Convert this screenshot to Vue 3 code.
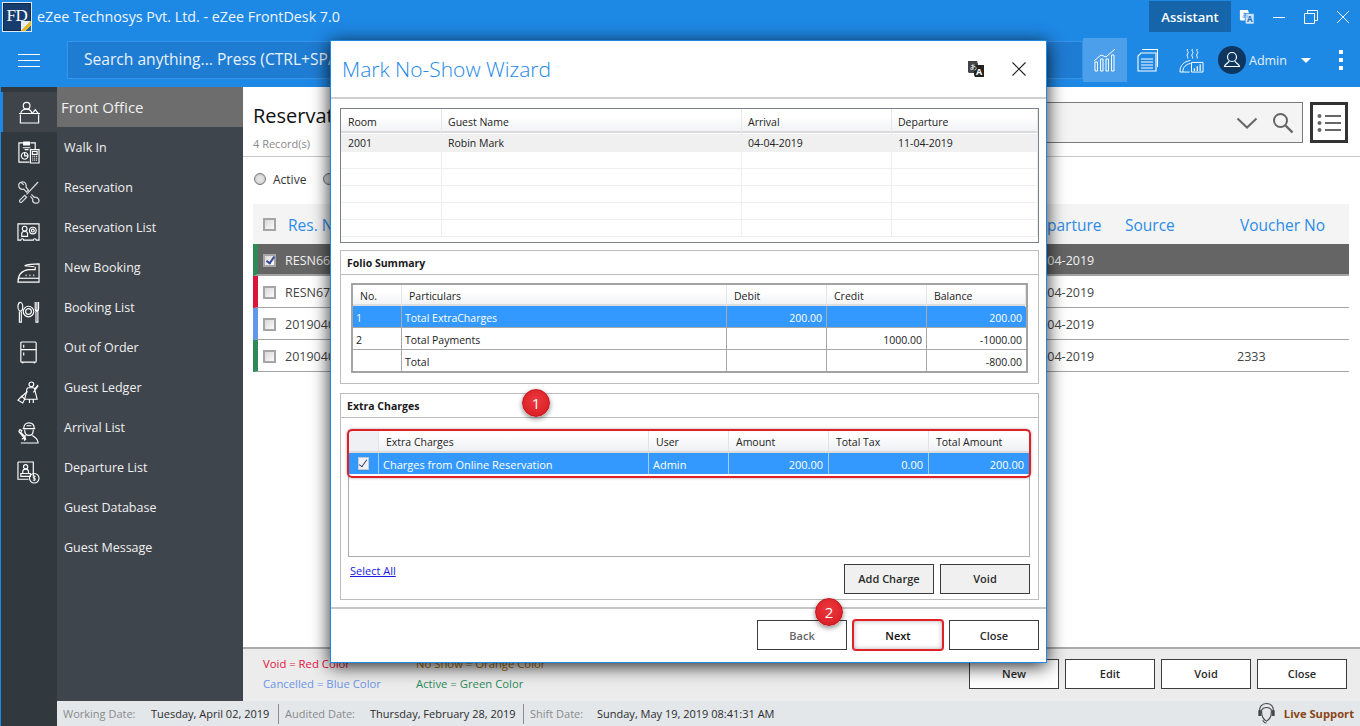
<script setup>
const nav = ['Walk In','Reservation','Reservation List','New Booking','Booking List','Out of Order','Guest Ledger','Arrival List','Departure List','Guest Database','Guest Message']
const rows = [
  { no:'RESN6601', dep:'11-04-2019', v:'', mark:'green', sel:true },
  { no:'RESN6702', dep:'11-04-2019', v:'', mark:'red' },
  { no:'20190401', dep:'11-04-2019', v:'', mark:'blue' },
  { no:'20190402', dep:'11-04-2019', v:'2333', mark:'green' },
]
const emptyRows = [1,2,3,4,5]
</script>

<template>
  <div class="app">
    <header class="topbar">
      <div class="titlerow">
        <div class="logo"><span>FD</span><i class="fold"></i></div>
        <div class="apptitle">eZee Technosys Pvt. Ltd. - eZee FrontDesk 7.0</div>
        <div class="assistant">Assistant</div>
        <svg class="translate" viewBox="0 0 18 18" width="16" height="16"><path d="M1 1h9l1 3v9H2L1 12z" fill="#fff"/><path d="M7 5h10v12H8l-1-2z" fill="#cfe4f8" stroke="#1e88e5" stroke-width=".8"/><text x="9" y="15" font-size="9" font-weight="700" fill="#1e6fbe" font-family="Open Sans">A</text><text x="3" y="9" font-size="7" fill="#1e88e5" font-family="Open Sans">あ</text></svg>
        <svg class="winbtn" viewBox="0 0 14 14" width="14" height="14"><path d="M1 7.500h12" stroke="#fff" stroke-width="1"/></svg>
        <svg class="winbtn" viewBox="0 0 14 14" width="14" height="14"><path d="M3.500 3V.5h10v10H11M.5 3.500h10v10H.5z" fill="none" stroke="#fff"/></svg>
        <svg class="winbtn" viewBox="0 0 14 14" width="14" height="14"><path d="M1 1l12 12M13 1L1 13" stroke="#fff" stroke-width="1"/></svg>
      </div>
      <div class="toolrow">
        <div class="burger"><i></i><i></i><i></i></div>
        <div class="searchall">Search anything... Press (CTRL+SPACE)</div>
        <div class="tool active">
          <svg viewBox="0 0 24 24" width="24" height="24" fill="none" stroke="#fff" stroke-width="1"><path d="M1 13l7-6 5 2 9-8"/><path d="M2 14h2.500v9H2zM7.500 11H10v12H7.500zM13 11h2.500v12H13zM18.500 7H21v16h-2.500z"/></svg>
        </div>
        <div class="tool doc">
          <svg viewBox="0 0 24 24" width="24" height="24" fill="none" stroke="#fff" stroke-width="1.100"><path d="M6 1.500h15.500V19"/><path d="M5 5h15v18H2V8z"/><path d="M5 11h12M5 14h12M5 17h12M5 20h12"/></svg>
        </div>
        <div class="tool">
          <svg viewBox="0 0 26 26" width="25" height="25" fill="none" stroke="#fff" stroke-width="1"><path d="M9 1c-2 2 2 3 0 5s1 3 0 5M14 1c-2 2 2 3 0 5s1 3 0 5M19 1c-2 2 2 3 0 5s1 3 0 5"/><path d="M1 25c0-7 4-11 11-12"/><path d="M4 25c0-5 3-8 8-9"/><path d="M1 25h10"/><path d="M13 15h12v10H13z"/><path d="M16 24v-3M19 24v-5M22 24v-7" stroke-width="1.300"/></svg>
        </div>
        <div class="avatar">
          <svg viewBox="0 0 20 20" width="20" height="20" fill="none" stroke="#fff" stroke-width="1.200"><circle cx="10" cy="7" r="4.500"/><path d="M7 11c0 2-4 2.500-4.500 5.500h15C17 13.500 13 13 13 11"/></svg>
        </div>
        <div class="adminname">Admin</div>
        <i class="caret"></i>
        <div class="vdots"><i></i><i></i><i></i></div>
      </div>
    </header>

    <div class="workspace">
      <aside class="rail">
        <div class="railitem current">
          <svg viewBox="0 0 24 24" width="24" height="24" fill="none" stroke="#fff" stroke-width="1.200"><circle cx="9" cy="5" r="3.500"/><path d="M3 13c0-3 3-4.500 6-4.500s5 1.500 5.500 4.500"/><path d="M15 13l3-4 3 4"/><path d="M1 13h22M2.500 14v9h19v-9"/></svg>
        </div>
        <div class="railitem">
          <svg viewBox="0 0 24 24" width="24" height="24" fill="none" stroke="#fff" stroke-width="1.200"><path d="M7 2H2v20h11M14 2h5v7"/><path d="M7 1h6v3H7z" fill="#fff"/><path d="M6 7h8M8 9h4"/><path d="M8 12a3.500 3.500 0 1 0 .1 0zM8 12v3.500h3.500" /><path d="M14 9h9v14h-9z"/><path d="M16 11h5v3h-5z"/><path d="M16 16h1M18 16h1M20 16h1M16 18h1M18 18h1M20 18h1M16 20h1M18 20h1M20 20h1"/></svg>
        </div>
        <div class="railitem">
          <svg viewBox="0 0 24 24" width="24" height="24" fill="none" stroke="#d8d8d8" stroke-width="1.300"><path d="M22 1L10 14M3 20l5-5 2 2-5 5c-2 1-3-1-2-2z"/><path d="M6 1C3 1 1 3 2 6c.7 2 3 3 5 2.500l3 3 2-2-2.500-3C10 4 9 1 6 1zM4.500 1.500L7 4"/><path d="M15 14l3 3c2-.5 5 1 5 3.500 0 2-2 3-4 2.500-2-.5-3-2-2.500-4L14 16"/></svg>
        </div>
        <div class="railitem">
          <svg viewBox="0 0 24 24" width="24" height="24" fill="none" stroke="#fff" stroke-width="1.200"><path d="M1 3h22v17h-3a1.500 1.500 0 0 0-3 0H7a1.500 1.500 0 0 0-3 0H1z"/><circle cx="8" cy="8" r="2.500"/><path d="M5 16v-3c0-1 1-2 3-2s3 1 3 2v3z"/><circle cx="16.500" cy="10" r="3.500"/><circle cx="16.500" cy="10" r="1.500"/></svg>
        </div>
        <div class="railitem">
          <svg viewBox="0 0 24 24" width="24" height="24" fill="none" stroke="#fff" stroke-width="1.200"><path d="M8 5c3-1.500 9-2 15-2v19H1c0-8 4-12 11-13h7V6"/><path d="M8 5l10 1"/><path d="M1 18h22"/><path d="M9 15h1M13 15h1M17 15h1" stroke-width="1.800"/></svg>
        </div>
        <div class="railitem">
          <svg viewBox="0 0 24 24" width="24" height="24" fill="none" stroke="#fff" stroke-width="1.200"><ellipse cx="3.500" cy="6" rx="2.500" ry="4.500"/><path d="M2.500 11v11h2V11"/><circle cx="12" cy="11" r="5.500"/><circle cx="12" cy="11" r="3"/><path d="M19 1v7M22.500 1v7M19 8c0 1.500 1 2.500 1.800 2.500S22.500 9.500 22.500 8M20.800 1v9.500M19.800 11v11h2V11"/></svg>
        </div>
        <div class="railitem">
          <svg viewBox="0 0 24 24" width="24" height="24" fill="none" stroke="#fff" stroke-width="1.200"><path d="M5 1h14q1 0 1 1v19q0 1-1 1H5q-1 0-1-1V2q0-1 1-1zM4 9h16M7 4v3M7 12v3M6 22v1.500M18 22v1.500"/></svg>
        </div>
        <div class="railitem">
          <svg viewBox="0 0 24 24" width="24" height="24" fill="none" stroke="#fff" stroke-width="1.200"><circle cx="15" cy="3.500" r="2.500"/><path d="M12 7c-1 0-2 2-2 4l-2 8h13l-2-8c0-2-1-4-2-4zM13 19v4M17 19v4M19 8l3-4M17 12l5-7"/><path d="M11 11L4 17"/><path d="M1 20l4-4 3 3-2 4z"/></svg>
        </div>
        <div class="railitem">
          <svg viewBox="0 0 24 24" width="24" height="24" fill="none" stroke="#fff" stroke-width="1.200"><path d="M7 8c0-4 2-6 5.500-6S18 4 18 8M6 8h13M8 9c0 4 2 6 4.500 6S17 13 17 9M10 5h5"/><path d="M9 15c-1 2-2 3-4 4M16 15c2 2 6 3 6 8H4"/><path d="M2 11l1.500 2L7 17l1 3 1-1-1-3-4-4 1-2-2-1z"/></svg>
        </div>
        <div class="railitem">
          <svg viewBox="0 0 24 24" width="24" height="24" fill="none" stroke="#fff" stroke-width="1.200"><path d="M1 1h16v15M1 1v18h11"/><circle cx="9" cy="6" r="2.200"/><path d="M6 13v-2c0-1.500 1-2.500 3-2.500s3 1 3 2.500v2zM4 13h10v3H4z"/><circle cx="18" cy="18" r="5"/><path d="M18 15v6M19.500 16h-2.500v2h2v2h-2.500" stroke-width=".9"/></svg>
        </div>
      </aside>

      <div class="rightside">
        <div class="upper">
          <nav class="subnav">
            <div class="subhead">Front Office</div>
            <div v-for="n in nav" :key="n" class="subitem">{{ n }}</div>
          </nav>

          <main class="main">
            <div class="mainhead">
              <div class="titleblock">
                <div class="pagetitle">Reservat</div>
                <div class="records">4 Record(s)</div>
              </div>
              <div class="filterbox">
                <svg viewBox="0 0 22 12" width="22" height="12" fill="none" stroke="#666" stroke-width="2"><path d="M1.500 1.500L11 10.500l9.500-9"/></svg>
                <svg viewBox="0 0 22 22" width="22" height="22" fill="none" stroke="#666" stroke-width="2"><circle cx="8.500" cy="8.500" r="6.500"/><path d="M13.500 13.500l7 7" stroke-width="2.400"/></svg>
              </div>
              <div class="listbtn">
                <svg viewBox="0 0 26 20" width="26" height="20" fill="#666"><circle cx="3.500" cy="3" r="2"/><circle cx="3.500" cy="10" r="2"/><circle cx="3.500" cy="17" r="2"/><path d="M9 2h16v2H9zM9 9h16v2H9zM9 16h16v2H9z"/></svg>
              </div>
            </div>
            <div class="filters">
              <label class="radio"><i></i>Active</label>
              <label class="radio"><i></i>Cancelled</label>
            </div>
            <div class="table">
              <div class="thead trow">
                <span class="cellcheck"><i class="check"></i></span>
                <span>Res. No</span><span>Departure</span><span>Source</span><span>Voucher No</span>
              </div>
              <div v-for="r in rows" :key="r.no" class="trow tbody" :class="[r.mark, { sel: r.sel }]">
                <span class="cellcheck"><i class="check" :class="{ on: r.sel }"></i></span>
                <span>{{ r.no }}</span><span class="dep">{{ r.dep }}</span><span></span><span>{{ r.v }}</span>
              </div>
            </div>
            <div class="actionbar">
              <div class="legend">
                <span class="lred">Void = Red Color</span><span class="lorange">No Show = Orange Color</span>
                <span class="lblue">Cancelled = Blue Color</span><span class="lgreen">Active = Green Color</span>
              </div>
              <div class="actions">
                <button>New</button><button>Edit</button><button>Void</button><button>Close</button>
              </div>
            </div>
          </main>
        </div>
        <footer class="status">
          <span class="k w1">Working Date:</span><span class="v w2">Tuesday, April 02, 2019</span><i class="sep"></i>
          <span class="k w3">Audited Date:</span><span class="v w4">Thursday, February 28, 2019</span><i class="sep"></i>
          <span class="k w5">Shift Date:</span><span class="v">Sunday, May 19, 2019 08:41:31 AM</span>
          <div class="live">
            <svg viewBox="0 0 20 24" width="19" height="23" fill="none" stroke="#444" stroke-width="1.100"><path d="M3 11C2 5 5 1.500 10 1.500S18 5 17 11"/><path d="M5 8c2-3 8-3 10 0 .5 5-1 10-5 12C6 18 4.500 13 5 8z"/><path d="M2 9v5h2V9zM16 9v5h2V9z" fill="#444"/><path d="M6 19c1 2 2 3 4 3"/></svg>
            <b>Live Support</b>
          </div>
        </footer>
      </div>
    </div>

    <section class="modal">
      <div class="modalhead">
        <h1>Mark No-Show Wizard</h1>
        <svg class="mtrans" viewBox="0 0 18 18" width="18" height="18"><path d="M1 1h9l1 3v9H2L1 12z" fill="#444"/><path d="M7 5h10v12H8l-1-2z" fill="#222"/><text x="9" y="15" font-size="9" font-weight="700" fill="#fff" font-family="Open Sans">A</text><text x="3" y="9" font-size="7" fill="#fff" font-family="Open Sans">あ</text></svg>
        <svg class="mclose" viewBox="0 0 14 14" width="14" height="14"><path d="M.5.500l13 13M13.500.500l-13 13" stroke="#222" stroke-width="1.100"/></svg>
      </div>
      <div class="modalbody">
        <div class="roomgrid">
          <div class="rg rghead"><span>Room</span><span>Guest Name</span><span>Arrival</span><span>Departure</span></div>
          <div class="rg rgrow"><span>2001</span><span>Robin Mark</span><span>04-04-2019</span><span>11-04-2019</span></div>
          <div v-for="e in emptyRows" :key="e" class="rg rgempty"><span></span><span></span><span></span><span></span></div>
        </div>

        <div class="panel folio">
          <div class="panelhead">Folio Summary</div>
          <div class="foliotable">
            <div class="ft fthead"><span>No.</span><span class="indent">Particulars</span><span>Debit</span><span>Credit</span><span>Balance</span></div>
            <div class="ft ftrow picked"><span>1</span><span>Total ExtraCharges</span><span class="num">200.00</span><span></span><span class="num">200.00</span></div>
            <div class="ft ftrow"><span>2</span><span>Total Payments</span><span></span><span class="num">1000.00</span><span class="num">-1000.00</span></div>
            <div class="ft ftrow"><span></span><span>Total</span><span></span><span></span><span class="num">-800.00</span></div>
          </div>
        </div>

        <div class="panel extra">
          <div class="panelhead">Extra Charges</div>
          <div class="extragrid">
            <div class="eg eghead"><span></span><span class="indent">Extra Charges</span><span class="indent">User</span><span class="indent">Amount</span><span class="indent">Total Tax</span><span class="indent">Total Amount</span></div>
            <div class="eg egrow"><span class="ecb"><i class="check on light"></i></span><span>Charges from Online Reservation</span><span>Admin</span><span class="num">200.00</span><span class="num">0.00</span><span class="num">200.00</span></div>
            <div class="redbox"></div>
          </div>
          <div class="extrafoot">
            <a class="selectall">Select All</a>
            <div class="extrabtns"><button>Add Charge</button><button>Void</button></div>
          </div>
          <div class="badge b1">1</div>
        </div>
      </div>
      <div class="modalfoot">
        <button class="muted">Back</button>
        <button class="next">Next</button>
        <button>Close</button>
        <div class="badge b2">2</div>
      </div>
    </section>
  </div>
</template>

<style>
html, body { margin: 0; overflow: hidden; }
</style>

<style scoped>
.app { position: relative; width: 1360px; height: 726px; overflow: hidden; display: flex; flex-direction: column; font-family: "Open Sans", "Noto Sans", sans-serif; background: #fff; }
.topbar { height: 87px; flex: none; background: #1e88e5; color: #fff; }
.titlerow { height: 33px; display: flex; align-items: center; }
.logo { position: relative; width: 28px; height: 28px; margin: 1px 0 0 2px; border: 1px solid #dfeaf4; background: #173d6e; box-shadow: inset 0 0 0 1px #0c2a50; display: flex; justify-content: center; align-items: flex-start; overflow: hidden; }
.logo span { font-family: "Liberation Serif", serif; font-size: 17px; line-height: 26px; color: #fff; letter-spacing: -.3px; }
.fold { position: absolute; right: 0; bottom: 0; width: 10px; height: 10px; background: linear-gradient(135deg, #e8eef5 48%, #e3b92a 50%, #e3b92a 72%, #1e66b0 74%); }
.apptitle { margin-left: 5px; font-size: 14.300px; white-space: nowrap; color: #eef6fd; }
.assistant { margin-left: auto; width: 82px; height: 31px; background: #1665ab; font-size: 13px; font-weight: 600; display: flex; align-items: center; justify-content: center; }
.translate { margin-left: 8px; }
.winbtn { margin-left: 18px; }
.translate + .winbtn { margin-left: 17px; }
.winbtn:last-child { margin-right: 10px; }
.toolrow { height: 54px; display: flex; align-items: center; }
.burger { width: 22px; margin-left: 18px; display: flex; flex-direction: column; gap: 5px; }
.burger i { display: block; height: 1px; background: #fff; }
.searchall { margin-left: 27px; width: 1016px; height: 38px; box-sizing: border-box; padding-left: 16px; background: #1f7cd3; border: 1px solid #3a93e4; font-size: 15.600px; line-height: 35px; color: #e7f2fc; white-space: nowrap; }
.tool { width: 44px; height: 44px; display: flex; align-items: center; justify-content: center; }
.tool.active { background: #4c9fea; }
.tool.doc { width: 42px; }
.avatar { width: 28px; height: 28px; margin-left: 5px; border-radius: 50%; background: #0e365e; display: flex; align-items: center; justify-content: center; }
.adminname { margin-left: 3px; font-size: 12.500px; color: #e6f1fb; }
.caret { margin-left: 14px; width: 0; height: 0; border-left: 5px solid transparent; border-right: 5px solid transparent; border-top: 5px solid #fff; }
.vdots { margin-left: 28px; display: flex; flex-direction: column; gap: 4px; }
.vdots i { display: block; width: 4px; height: 4px; background: #fff; }

.workspace { flex: 1; display: flex; min-height: 0; }
.rail { width: 56px; flex: none; border-left: 1px solid #1e88e5; background: #31383e; padding-top: 5px; box-sizing: content-box; }
.railitem { height: 40px; display: flex; align-items: center; justify-content: center; padding-right: 1px; }
.railitem svg { width: 23px; height: 23px; }
.railitem.current { background: #3e444a; border-left: 3px solid #1e88e5; margin-left: -1px; }
.rightside { flex: 1; min-width: 0; display: flex; flex-direction: column; }
.upper { flex: 1; display: flex; min-height: 0; }
.subnav { width: 186px; flex: none; background: #3f454c; color: #f0f0f0; }
.subhead { height: 40px; background: #6d6d6d; padding-left: 4px; font-size: 15px; font-weight: 500; line-height: 41px; }
.subitem { height: 40px; padding-left: 7px; font-size: 12.500px; line-height: 42px; }
.main { flex: 1; min-width: 0; display: flex; flex-direction: column; background: #fff; }
.mainhead { height: 70px; flex: none; box-sizing: border-box; border-bottom: 1px solid #c9c9c9; padding: 15px 12px 0 10px; display: flex; align-items: flex-start; }
.titleblock { width: 78px; margin-right: auto; white-space: nowrap; }
.pagetitle { font-size: 20px; line-height: 28px; color: #111; }
.records { margin-top: 6px; font-size: 11px; color: #888; }
.filterbox { width: 300px; height: 41px; box-sizing: border-box; border: 1px solid #7a7a7a; background: #f4f4f4; display: flex; align-items: center; justify-content: flex-end; gap: 14px; padding-right: 8px; }
.listbtn { width: 38px; height: 41px; margin-left: 7px; box-sizing: border-box; border: 3px solid #333; display: flex; align-items: center; justify-content: center; background: #fff; }
.filters { height: 47px; flex: none; box-sizing: border-box; padding: 0 0 3px 11px; display: flex; align-items: center; gap: 17px; }
.radio { display: flex; align-items: center; gap: 7px; font-size: 12px; color: #333; }
.radio i { width: 10px; height: 10px; border-radius: 50%; border: 1px solid #777; background: radial-gradient(circle, #e3e3e3 30%, #bbb 100%); }
.table { flex: 1; margin: 0 11px 0 10px; min-height: 0; }
.trow { display: grid; grid-template-columns: 32px 739px 98px 115px 1fr; align-items: center; white-space: nowrap; }
.thead { height: 40px; padding-top: 1px; box-sizing: border-box; background: #f4f4f4; color: #2c8cea; font-size: 15.500px; }
.thead span:not(.cellcheck) { padding-left: 3px; }
.thead .cellcheck { padding-left: 10px; }
.tbody { grid-template-columns: 27px 739px 98px 115px 1fr; height: 32px; padding-top: 1px; box-sizing: border-box; border-bottom: 1px solid #a3a3a3; font-size: 12.500px; color: #444; border-left: 5px solid #000; }
.tbody .cellcheck { padding-left: 5px; }
.tbody .dep { padding-left: 5px; }
.cellcheck { display: flex; align-items: center; }
.tbody.green { border-left-color: #2e8b57; }
.tbody.red { border-left-color: #dc143c; }
.tbody.blue { border-left-color: #6495ed; }
.tbody.sel { background: #656565; color: #f2f2f2; border-bottom: 2px solid #a3a3a3; padding-top: 2px; }
.check { position: relative; display: block; width: 9px; height: 9px; border: 2px solid #a5a5a5; background: linear-gradient(135deg, #d8d8d8, #fbfbfb); }
.check.on::after { content: ""; position: absolute; left: 3px; top: -1px; width: 3px; height: 7px; border-right: 2px solid #3b4a9c; border-bottom: 2px solid #3b4a9c; transform: rotate(35deg); }
.check.light { width: 9px; height: 11px; border: 1px solid #c4c8d0; background: #eef1f6; }
.check.light::after { left: 2px; top: 0; height: 8px; border-width: 0 1.500px 1.500px 0; border-color: #39456e; }
.actionbar { height: 54px; flex: none; box-sizing: border-box; border-top: 2px solid #ababab; background: #ececec; display: flex; justify-content: space-between; padding: 10px 13px 0 20px; }
.legend { margin-top: -5px; display: grid; grid-template-columns: 153px auto; grid-auto-rows: 20px; font-size: 11.300px; line-height: 20px; white-space: nowrap; align-content: start; }
.lred { color: #e4103f; } .lorange { color: #a36a00; } .lblue { color: #6b94e8; } .lgreen { color: #2d8a57; }
.actions { display: flex; gap: 6px; }
button { width: 90px; height: 30px; padding: 0 0 1px; background: #fff; border: 1px solid #3c3c3c; font-family: inherit; font-size: 11px; font-weight: 600; color: #2a2a2a; }
.status { height: 25px; flex: none; background: #e3e7ea; display: flex; align-items: center; font-size: 11px; white-space: nowrap; padding-left: 6px; }
.k { color: #8a8a8a; } .v { color: #2b2b2b; }
.w1 { width: 88px; } .w2 { width: 127px; } .w3 { width: 85px; } .w4 { width: 153px; } .w5 { width: 67px; }
.sep { width: 1px; height: 20px; background: #8c8c8c; margin-right: 6px; }
.live { margin-left: auto; display: flex; align-items: center; gap: 8px; padding-right: 6px; }
.live b { font-size: 11.200px; font-weight: 700; color: #8a4513; }

.modal { position: absolute; left: 330px; top: 40px; width: 717px; height: 623px; box-sizing: border-box; border: 1px solid #1e88e5; background: #fff; box-shadow: 0 3px 17px rgba(0,0,0,.85); display: flex; flex-direction: column; color: #222; font-size: 10.500px; }
.modalhead { height: 58px; flex: none; box-sizing: border-box; border-bottom: 2px solid #cfcfcf; display: flex; align-items: center; padding: 0 20px 0 11px; }
.modalhead h1 { margin: 0; flex: 1; font-size: 21px; font-weight: 300; color: #1e88e5; }
.mclose { margin-left: 27px; }
.modalbody { flex: 1; padding: 9px 7px 0 9px; display: flex; flex-direction: column; min-height: 0; }
.roomgrid { height: 135px; flex: none; box-sizing: border-box; border: 1px solid #7c808a; overflow: hidden; }
.rg { display: grid; grid-template-columns: 101px 300px 150px 1fr; }
.rg span { padding-left: 6px; }
.rg span:first-child { padding-left: 7px; }
.rghead { height: 24px; background: linear-gradient(#fff 35%, #f2f3f5); border-bottom: 2px solid #dadada; line-height: 26px; box-sizing: border-box; }
.rghead span { border-right: 1px solid #e8e8e8; }
.rgrow { height: 18px; background: #f0f0f0; line-height: 18px; margin-top: 1px; }
.rgempty { height: 17px; box-sizing: border-box; border-bottom: 1px solid #eeeeee; }
.rgempty span { border-right: 1px solid #eeeeee; }
.panel { position: relative; flex: none; box-sizing: border-box; border: 1px solid #bdbdbd; }
.panelhead { height: 24px; box-sizing: border-box; border-bottom: 1px solid #bdbdbd; padding-left: 6px; font-weight: 700; line-height: 24px; color: #1a1a1a; }
.folio { margin-top: 7px; height: 134px; }
.foliotable { margin: 8px 0 0 10px; width: 677px; height: 90px; box-sizing: border-box; border: 2px solid #a3a3a3; }
.ft { display: grid; grid-template-columns: 49px 325px 100px 100px 1fr; }
.ft span { padding-left: 7px; }
.ft .indent { padding-left: 7px; }
.fthead { height: 21px; box-sizing: border-box; background: linear-gradient(#fff 35%, #f2f3f5); border-bottom: 2px solid #dedede; line-height: 22px; }
.fthead span { border-right: 1px solid #e6e6e6; }
.ftrow { height: 22px; box-sizing: border-box; border-bottom: 1px solid #a8a8a8; line-height: 24px; grid-template-rows: 21px; }
.ftrow:last-child { border-bottom: 0; }
.ftrow span { border-right: 1px solid #a8a8a8; padding-left: 3px; }
.ftrow span:last-child, .eg span:last-child { border-right: 0; }
.picked { background: #3399ff; color: #fff; }
.num { text-align: right; padding: 0 4px 0 0 !important; }
.extra { margin-top: 9px; height: 207px; }
.extragrid { position: relative; margin: 12px 8px 0 7px; height: 127px; box-sizing: border-box; border: 1px solid #acacac; }
.eg { display: grid; grid-template-columns: 30px 270px 80px 100px 100px 1fr; }
.eg span { padding-left: 4px; }
.eg .indent { padding-left: 7px; }
.eghead { height: 22px; box-sizing: border-box; background: linear-gradient(#fff 20%, #eef0f3); border-bottom: 2px solid #dcdcdc; line-height: 23px; grid-template-rows: 20px; }
.eghead span { border-right: 1px solid #e3e3e3; }
.eghead span:first-child { background: #eef0f3; }
.egrow { height: 21px; background: #3399ff; color: #fff; font-size: 11px; line-height: 23px; grid-template-rows: 21px; }
.egrow span { border-right: 1px solid #a5cdf5; }
.egrow .num { padding-right: 5px !important; }
.egrow .ecb { padding-left: 9px; display: flex; align-items: center; }
.redbox { position: absolute; left: -2px; right: -2px; top: -2px; height: 49px; box-sizing: border-box; border: 2px solid #e01f26; border-radius: 5px; box-shadow: 0 0 3px rgba(0,0,0,.35); }
.extrafoot { display: flex; justify-content: space-between; margin: 7px 8px 0 9px; }
.selectall { color: #1a1ae0; font-size: 11px; text-decoration: underline; line-height: 14px; }
.extrabtns { display: flex; gap: 6px; }
.extrabtns button { background: #f0f0f0; }
.modalfoot { position: relative; flex: none; height: 55px; box-sizing: border-box; border-top: 2px solid #c6c6c6; display: flex; justify-content: flex-end; gap: 6px; padding: 11px 7px 0 0; }
.modalfoot button { padding: 0; }
.muted { color: #666; }
.next { position: relative; box-shadow: 0 0 0 1px #e01f26, inset 0 0 5px rgba(0,0,0,.3); border-color: #e01f26; border-radius: 3px; color: #111; }
.badge { position: absolute; width: 28px; height: 28px; border-radius: 50%; background: radial-gradient(circle at 50% 40%, #ec3a3f, #d5181f); border: 1px solid #c0161c; box-sizing: border-box; color: #fff; font-size: 15px; line-height: 26px; text-align: center; box-shadow: 0 2px 5px rgba(0,0,0,.45); }
.b1 { left: 181px; top: -5px; }
.b2 { left: 484px; top: -11px; }
</style>
